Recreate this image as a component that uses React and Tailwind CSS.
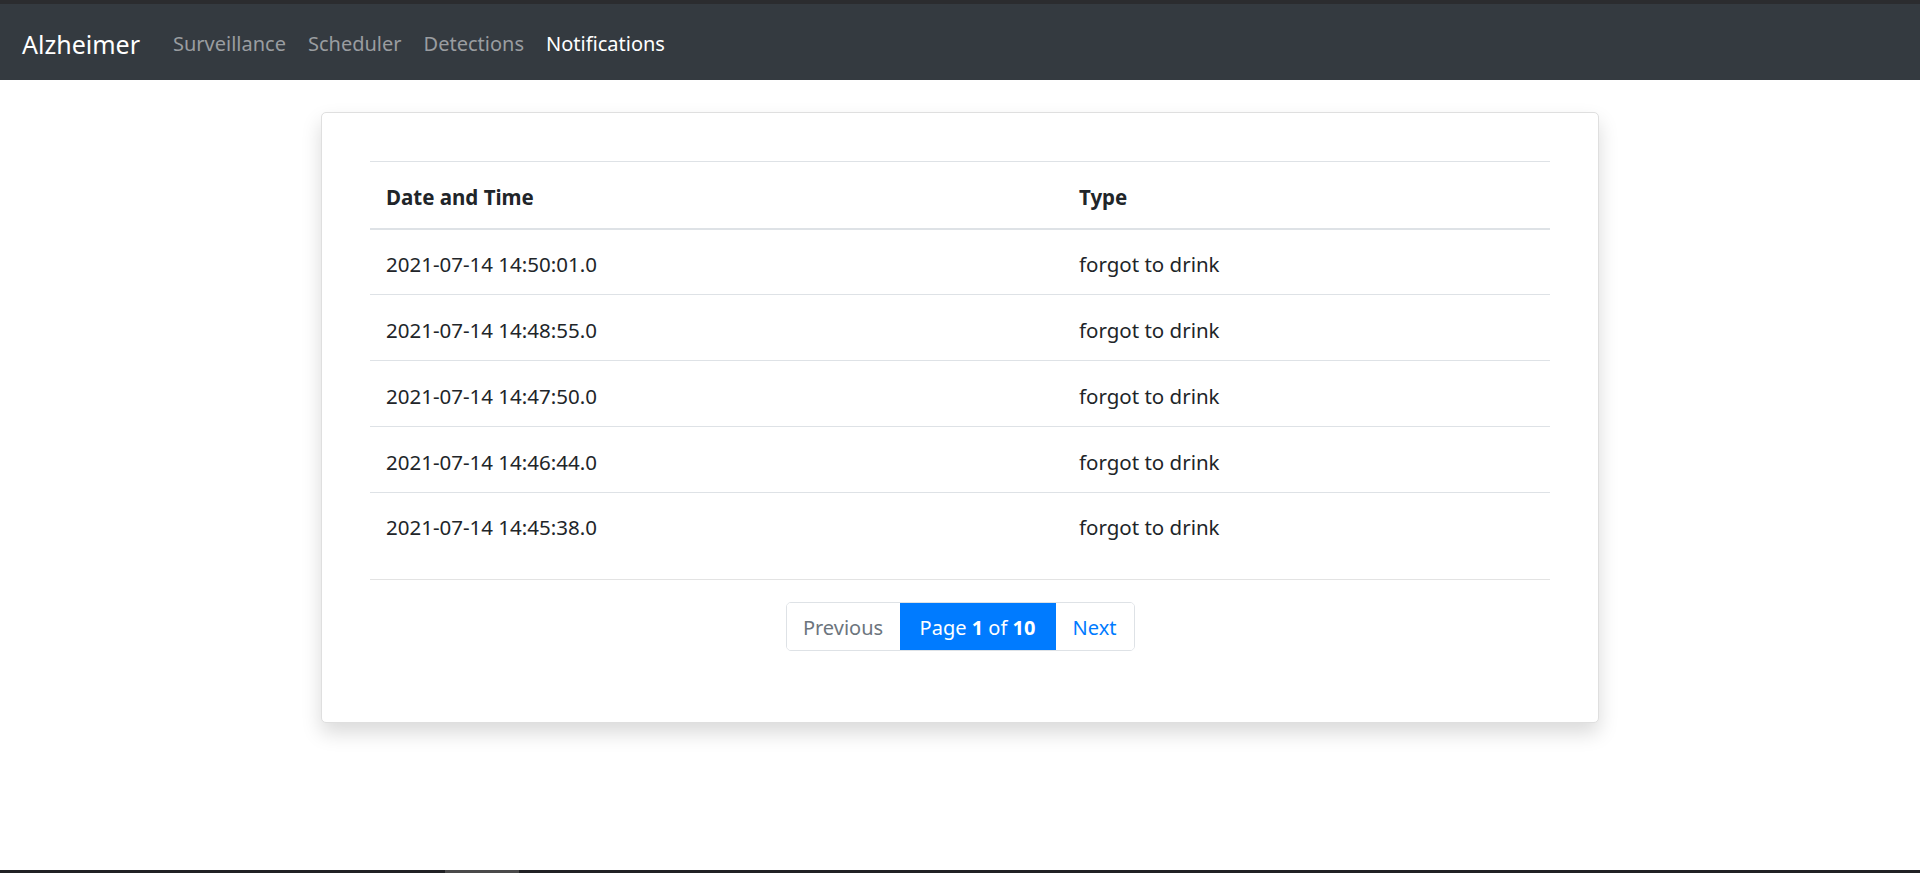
import React from "react";

const rows = [
  ["2021-07-14 14:50:01.0", "forgot to drink"],
  ["2021-07-14 14:48:55.0", "forgot to drink"],
  ["2021-07-14 14:47:50.0", "forgot to drink"],
  ["2021-07-14 14:46:44.0", "forgot to drink"],
  ["2021-07-14 14:45:38.0", "forgot to drink"],
];

export default function App() {
  return (
    <div
      className="h-screen flex flex-col bg-white text-[#212529]"
      style={{ fontFamily: '"Segoe UI", "Noto Sans", "Open Sans", sans-serif' }}
    >
      <div className="h-[4px] bg-[#2b2c2f]" />
      <nav className="h-[76px] bg-[#343a40] flex items-center px-[22px] pt-[4px]">
        <span className="text-[25px] text-white mr-[22px] leading-none">Alzheimer</span>
        <div className="flex items-center text-[20px] leading-none">
          <span className="px-[11px] text-[#9a9da0]">Surveillance</span>
          <span className="px-[11px] text-[#9a9da0]">Scheduler</span>
          <span className="px-[11px] text-[#9a9da0]">Detections</span>
          <span className="px-[11px] text-white">Notifications</span>
        </div>
      </nav>
      <div className="flex-1 flex justify-center pt-[32px]">
        <div className="w-[1278px] h-[611px] border border-[#dfdfdf] rounded-[5px] bg-white shadow-[0_10px_20px_rgba(0,0,0,0.15)] p-[48px] flex flex-col">
          <table className="w-full border-collapse text-[20.5px]">
            <thead>
              <tr className="border-t border-[#dee2e6] border-b-2 h-[67px]">
                <th className="w-[693px] text-left font-bold px-[16px] pt-[5px]">Date and Time</th>
                <th className="text-left font-bold px-[16px] pt-[5px]">Type</th>
              </tr>
            </thead>
            <tbody>
              {rows.map((r, i) => (
                <tr
                  key={i}
                  className={i < rows.length - 1 ? "border-b border-[#dee2e6] h-[66px]" : "h-[65px]"}
                >
                  <td className="px-[16px] pt-[5px]">{r[0]}</td>
                  <td className="px-[16px] pt-[5px]">{r[1]}</td>
                </tr>
              ))}
            </tbody>
          </table>
          <div className="mt-[21px] border-t border-[#e3e3e3]" />
          <div className="flex justify-center mt-[22px]">
            <div className="flex h-[49px] text-[20px] border border-[#dee2e6] rounded-[5px] overflow-hidden">
              <span className="w-[113px] flex items-center justify-center pt-[4px] text-[#6c757d] bg-white">Previous</span>
              <span className="w-[156px] flex items-center justify-center pt-[4px] text-white bg-[#007bff]">
                Page&nbsp;<b>1</b>&nbsp;of&nbsp;<b>10</b>
              </span>
              <span className="w-[78px] flex items-center justify-center pt-[4px] text-[#007bff] bg-white">Next</span>
            </div>
          </div>
        </div>
      </div>
      <div className="h-[3px] bg-[#202124] flex">
        <div className="w-[445px]" />
        <div className="w-[74px] bg-[#4a4a4a]" />
      </div>
    </div>
  );
}
